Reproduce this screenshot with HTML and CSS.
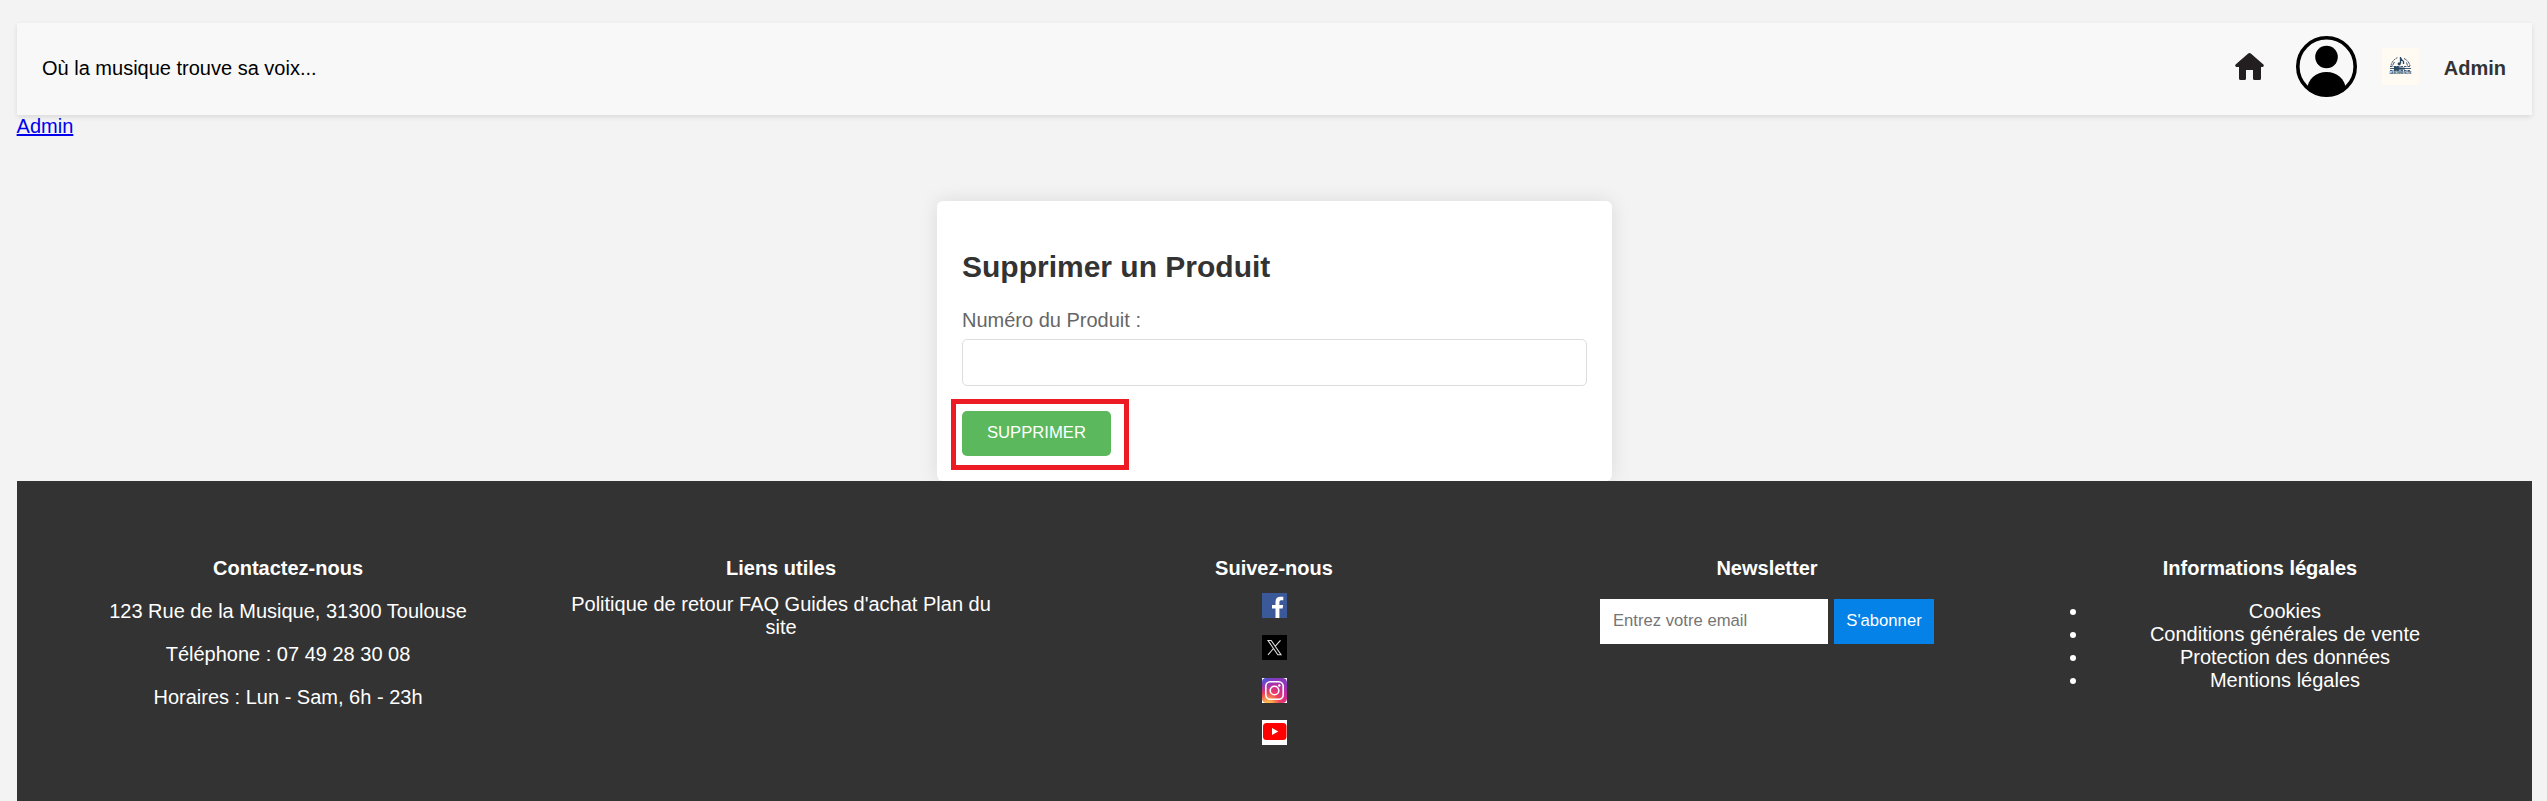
FILE: index.html
```html
<!DOCTYPE html>
<html lang="fr">
<head>
<meta charset="utf-8">
<title>Supprimer un Produit</title>
<link rel="stylesheet" href="styles.css">
</head>
<body>
<header class="header">
  <div class="slogan">Où la musique trouve sa voix...</div>
  <nav class="nav">
    <svg class="home" viewBox="0 0 29 27"><path fill="#231f20" d="M13.2.5Q14.500-.5 15.800.5L28.400 11.500Q29.500 13.300 27.500 14H26V25.500Q26 27 24.500 27H19.500Q18 27 18 25.500V17H11V25.500Q11 27 9.500 27H5.500Q4 27 4 25.500V14H1.500Q-.5 13.300.6 11.500Z"/></svg>
    <svg class="user" viewBox="0 0 61 61"><defs><clipPath id="disc"><circle cx="30.500" cy="30.500" r="30"/></clipPath></defs><circle cx="30.500" cy="30.500" r="28.700" fill="none" stroke="#000" stroke-width="3.600"/><circle cx="30.500" cy="21" r="11.300"/><path clip-path="url(#disc)" d="M11 53C12 43 20 36 30.500 36S49 43 50 53L44 61H17Z"/></svg>
    <svg class="logo" viewBox="0 0 37 37"><path fill="#fffaf2" d="M0 0h37v37H0z"/><g fill="none" stroke="#294763"><path stroke-width="1" stroke-dasharray="2 .8" d="M9 17.500Q10.500 11.500 16 9.500M22 10.500Q27 13 28 18"/><path stroke-width="1.300" d="M18.500 15.500V9Q19 12 21.500 13.500V16"/><path stroke-width=".9" d="M8 20.500H29M12.500 14L10.500 17.500M24.500 14.500L25.500 17.500"/><path stroke-width=".9" stroke-dasharray="2.500 1" d="M8 18.500H29M8 22.500H29"/></g><path fill="#294763" d="M12 19Q14.500 17.500 17 19.200L23 19.700V21.500L17 21.800Q14 23.500 12 22Z"/><circle cx="17.200" cy="15.800" r="1.600" fill="#294763"/><text x="18.500" y="26.400" text-anchor="middle" textLength="22" class="logo-name">LA BONNE NOTE</text></svg>
    <span class="role">Admin</span>
  </nav>
</header>
<a class="admin-link" href="#">Admin</a>
<main class="card">
  <h2>Supprimer un Produit</h2>
  <label for="num">Numéro du Produit :</label>
  <input class="number" id="num" type="text">
  <div class="action"><button class="delete">SUPPRIMER</button><span class="highlight"></span></div>
</main>
<footer class="footer">
  <section><h4>Contactez-nous</h4><p>123 Rue de la Musique, 31300 Toulouse</p><p>Téléphone : 07 49 28 30 08</p><p>Horaires : Lun - Sam, 6h - 23h</p></section>
  <section><h4>Liens utiles</h4><div>Politique de retour FAQ Guides d'achat Plan du site</div></section>
  <section><h4>Suivez-nous</h4>
    <div class="social">
      <svg viewBox="0 0 25 25"><path fill="#3b5998" d="M0 0h25v25H0z"/><path fill="#fff" d="M13.500 25V15.500H10V12H13.500V9Q13.500 3.800 18.500 3.800H21.300V7.300H19Q17.400 7.300 17.400 9V12H21.200L20.600 15.500H17.400V25Z"/></svg>
      <svg viewBox="0 0 25 25"><path d="M0 0h25v25H0z"/><path fill="none" stroke="#ddd" stroke-width="1.100" d="M6 5.500H9.200L19 19.700H15.800ZM18.500 5.300L13.300 11.200M11.500 13.500L6 19.800"/></svg>
      <svg viewBox="0 0 25 25"><defs><radialGradient id="ig" cx=".25" cy="1.050" r="1.050"><stop offset="0" stop-color="#ffd15c"/><stop offset=".2" stop-color="#fb9a4b"/><stop offset=".45" stop-color="#ea3f5d"/><stop offset=".7" stop-color="#cf2c92"/><stop offset="1" stop-color="#8a38bd"/></radialGradient><radialGradient id="igb" cx=".05" cy="0" r=".6"><stop offset="0" stop-color="#405de0"/><stop offset="1" stop-color="#7038c8" stop-opacity="0"/></radialGradient></defs><path fill="#fff" d="M0 0h25v25H0z"/><rect width="25" height="25" rx="4.500" fill="url(#ig)"/><rect width="25" height="25" rx="4.500" fill="url(#igb)"/><g fill="none" stroke="#fff" stroke-width="1.600"><rect x="3.800" y="3.800" width="17.400" height="17.400" rx="4.500"/><circle cx="12.500" cy="12.500" r="4.300"/></g><circle cx="17.300" cy="7.500" r="1.200" fill="#fff"/></svg>
      <svg viewBox="0 0 25 25"><path fill="#fff" d="M0 0h25v25H0z"/><rect x="1" y="3" width="23.500" height="17" rx="3.500" fill="#f00"/><path fill="#fff" d="M10 8V15L16.300 11.500Z"/></svg>
    </div>
  </section>
  <section><h4>Newsletter</h4><form class="newsletter"><input type="email" placeholder="Entrez votre email"><button type="button">S'abonner</button></form></section>
  <section><h4>Informations légales</h4><ul><li>Cookies</li><li>Conditions générales de vente</li><li>Protection des données</li><li>Mentions légales</li></ul></section>
</footer>
</body>
</html>
```
FILE: styles.css
```css
* { box-sizing: border-box; }
html { background: #f3f3f3; }
body {
  margin: 0;
  padding: 23px 15px 0 17px;
  height: 801px;
  overflow: hidden;
  font: 20px/23px "Liberation Sans", Arial, sans-serif;
}
svg { display: block; flex: none; }
input, button { font: 16.667px/19px "Liberation Sans", Arial, sans-serif; margin: 0; }
.header {
  display: flex;
  justify-content: space-between;
  align-items: center;
  height: 92px;
  padding: 0 26px 2px 25px;
  background: #f8f8f8;
  box-shadow: 0 2px 5px rgba(0, 0, 0, .1);
}
.nav { display: flex; align-items: center; }
.home { width: 29px; height: 27px; margin: -3px 32px 0 0; }
.user { width: 61px; height: 61px; margin: -3px 25px 0 0; }
.logo { width: 37px; height: 37px; margin: -3px 25px 0 0; }
.logo-name { font: bold 3.200px "Liberation Sans", Arial, sans-serif; fill: #294763; }
.role { font-weight: bold; color: #333; }
.admin-link { display: block; width: max-content; margin-left: -.4px; color: #00e; }
.card {
  width: 675px;
  height: 280px;
  margin: 63px auto 0;
  padding: 49px 25px 0;
  background: #fff;
  border-radius: 6px;
  box-shadow: 0 0 19px rgba(0, 0, 0, .1);
}
.card h2 { margin: 0 0 25px; font-size: 30px; line-height: 34px; color: #333; }
.card label { display: block; margin-bottom: 7px; color: #666; }
.number { display: block; width: 100%; height: 47px; border: 1px solid #ddd; border-radius: 5px; }
.action { position: relative; margin-top: 25px; width: 149px; height: 45px; }
.delete { display: block; width: 149px; height: 45px; padding: 0 0 2px; border: 0; border-radius: 5px; background: #5cb85c; color: #fff; }
.highlight { position: absolute; left: -11px; top: -12px; width: 178px; height: 71px; border: 5px solid #ed1c24; }
.footer {
  display: flex;
  gap: 50px;
  height: 320px;
  padding: 76px 50.500px 0 49.500px;
  background: #333;
  color: #fff;
  text-align: center;
  position: relative;
}
.footer section { flex: 1 1 0; min-width: 0; }
.footer h4 { margin: 0 0 13px; font-size: 20px; }
.footer p, .footer ul { margin: 20px 0; }
.footer ul { padding-left: 50px; }
.social { display: flex; flex-direction: column; align-items: center; gap: 17.330px; padding-left: 1px; }
.social svg { width: 25px; height: 25px; }
.newsletter { display: flex; justify-content: center; gap: 6px; margin-top: 19px; }
.newsletter input { width: 228px; height: 45px; padding: 0 13px 2px; border: 0; background: #fff; }
.newsletter input::placeholder { color: #757575; }
.newsletter button { width: 100px; height: 45px; padding: 0 0 2px; border: 0; background: #0582e8; color: #fff; }
```
